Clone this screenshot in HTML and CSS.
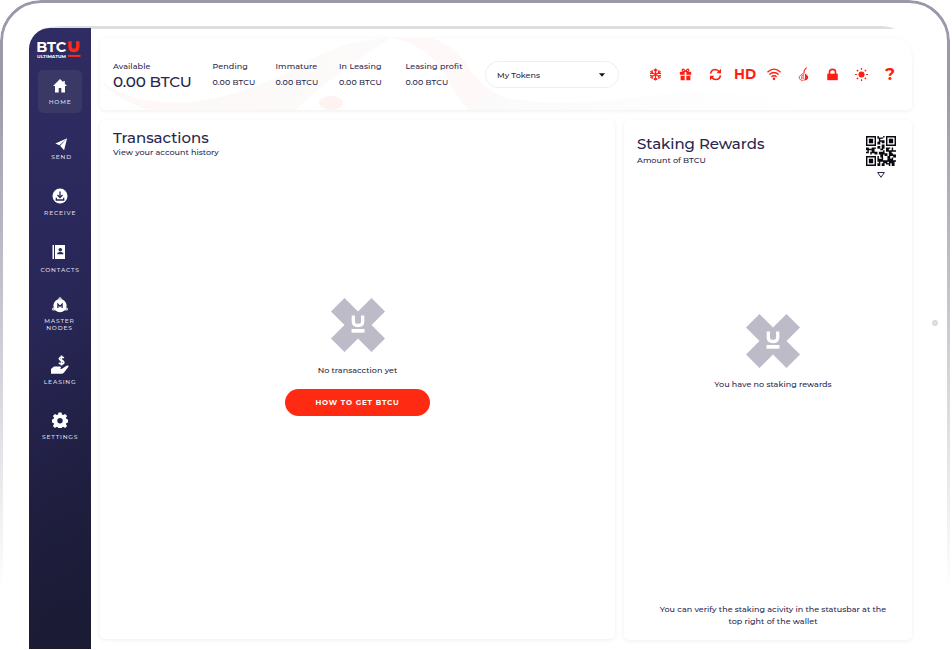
FILE: index.html
```html
<!DOCTYPE html>
<html lang="en">
<head>
<meta charset="utf-8">
<title>BTCU Wallet</title>
<link rel="stylesheet" href="styles.css">
</head>
<body>
<div class="device">
  <div class="bezel"></div>
  <i class="camera"></i>
  <svg class="edge" viewBox="0 0 855 3" preserveAspectRatio="none"><path d="M0 3Q12 0 24 0H842Q850 .5 855 3H0" fill="#dededf"/></svg>
  <div class="app">
    <nav class="sidebar">
      <svg class="logo" viewBox="0 0 44 17">
        <text class="logo-name" x="-.8" y="10.500" textLength="30" lengthAdjust="spacingAndGlyphs">BTC</text>
        <path d="M33 .3v5.700q0 3.500 3.900 3.500t3.900-3.500V.3" fill="none" stroke="#ff2a16" stroke-width="3.400"/>
        <path d="M31 13.900h12.500v2H31z" fill="#ff2a16"/>
        <text class="logo-sub" x="0" y="16.500" textLength="29" lengthAdjust="spacingAndGlyphs">ULTIMATUM</text>
      </svg>
      <a class="item active"><svg viewBox="0 0 16 16"><path d="M8 1L1 8h2v6.500h3.700V10h2.600v4.500H13V8h2l-2.200-2.200V3h-1.500v1.300z"/></svg><span>HOME</span></a>
      <a class="item send"><svg viewBox="0 0 16 16"><path d="M15 1.500L1.500 7.500l4.700 2zM15 1.500L7 10l4.500 5z"/></svg><span>SEND</span></a>
      <a class="item receive"><svg viewBox="0 0 16 16"><circle cx="8" cy="8" r="7.500"/><path class="cut" d="M8 3.500v6M5.500 7L8 9.500 10.500 7M4.300 9.800V12h7.400V9.800"/></svg><span>RECEIVE</span></a>
      <a class="item contacts"><svg viewBox="0 0 16 16"><path d="M1.500 1h1.500v14H1.500zM4 1h10v14H4z"/><circle cx="9.300" cy="5.800" r="1.800" fill="#27265a"/><path d="M6.300 10.200V9l2-1h2l2 1v1.200z" fill="#27265a"/></svg><span>CONTACTS</span></a>
      <a class="item master"><svg viewBox="0 0 16 16"><circle cx="8" cy="8.600" r="6.600"/><circle cx="8" cy="1.900" r="1.600"/><circle cx="1.700" cy="12" r="1.600"/><circle cx="14.300" cy="12" r="1.600"/><path class="cut" d="M5.900 11V7.200L8 9.400l2.100-2.200V11"/><path class="hole" d="M7.500 1.900h1M1.200 12h1M13.800 12h1"/></svg><span>MASTER<br>NODES</span></a>
      <a class="item leasing"><svg viewBox="0 0 18 20"><path d="M12.800 3Q12 2 10.500 2T8.300 3.700Q8.300 5 10.500 5.400T12.900 7.400Q12.700 9 10.500 9T8 7.800M10.500.5v10" fill="none" stroke="#fff" stroke-width="1.600"/><path d="M0 14l3-2.500h5.500q1.500 0 1.500 1.200t-2 1.200h2.500L16 10.500q2-.5 1.500 1.200L13 17.500q-1 1.200-2.500 1.200H0z"/></svg><span>LEASING</span></a>
      <a class="item settings"><svg viewBox="0 0 16 16"><path d="M6.500.5h3l.4 2 1.300.6 1.900-1.200 2 2-1.200 1.900.6 1.300 1.500.4v3l-1.500.4-.6 1.200 1.200 1.900-2 2-1.900-1.200-1.300.6-.4 2h-3l-.4-2-1.300-.6L2.900 16l-2-2 1.200-1.900-.6-1.200-1.500-.4v-3l1.500-.4.600-1.300L.9 3.900l2-2 1.900 1.200 1.300-.6z"/><circle cx="8" cy="8.800" r="2.700" fill="#232250"/></svg><span>SETTINGS</span></a>
    </nav>
    <main class="content">
      <header class="card topbar">
        <svg class="waves" viewBox="0 0 812 72" preserveAspectRatio="none">
          <defs>
            <linearGradient id="w" x1="0" x2="1"><stop offset="0" stop-color="#fef6f5"/><stop offset="1" stop-color="#fbf9f9"/></linearGradient>
            <linearGradient id="g" x1="0" x2="1"><stop offset="0" stop-color="#fafafa"/><stop offset="1" stop-color="#fff"/></linearGradient>
          </defs>
          <path d="M0 43Q35 68 90 64Q145 58 195 30Q245 0 291 0Q225 42 196 72H48Q15 60 0 43" fill="url(#w)" opacity=".8"/>
          <path d="M291 0H330Q350 4 366 25Q385 60 430 66L450 72H368Q350 48 345 36Q325 5 291 0" fill="#fdf7f6" opacity=".75"/>
          <path d="M385 54Q440 72 530 60T700 63V72H368" fill="url(#g)"/>
          <ellipse cx="231" cy="65" rx="12" ry="7" fill="#fef3f1"/>
        </svg>
        <dl class="balances">
          <div class="main"><dt>Available</dt><dd>0.00 BTCU</dd></div>
          <div class="pending"><dt>Pending</dt><dd>0.00 BTCU</dd></div>
          <div class="immature"><dt>Immature</dt><dd>0.00 BTCU</dd></div>
          <div class="in-leasing"><dt>In Leasing</dt><dd>0.00 BTCU</dd></div>
          <div class="profit"><dt>Leasing profit</dt><dd>0.00 BTCU</dd></div>
        </dl>
        <button class="tokens">My Tokens<svg viewBox="0 0 6 4"><path d="M0 .3h6L3 3.700z"/></svg></button>
        <div class="status">
          <svg viewBox="0 0 16 16"><g class="line" stroke-width="1.500"><path d="M8 .5v15M1.500 4.300l13 7.400M1.500 11.700l13-7.400M5.800 1.800L8 4l2.200-2.200M5.800 14.200L8 12l2.200 2.200M1.200 7l3.300-1-.9-3.300M14.800 9l-3.300 1 .9 3.300M1.200 9l3.300 1-.9 3.300M14.800 7l-3.300-1 .9-3.300"/></g></svg>
          <svg viewBox="0 0 16 16"><path d="M1 4.500h6v3.800H1zM9 4.500h6v3.800H9zM2 9.500h5V15H2zM9 9.500h5V15H9z"/><path class="line" stroke-width="1.500" d="M8 4.500Q6 .7 4.500 1.600T5 4.300h6q2-1.800.5-2.700T8 4.500"/></svg>
          <svg viewBox="0 0 16 16"><path class="line" stroke-width="2" d="M2 7q.5-4.700 5.500-5.200 3.200 0 5.200 2.700M14 9q-.5 4.700-5.500 5.200-3.200 0-5.200-2.700"/><path d="M14.800 1v5.500H9.300zM1.200 15V9.500h5.500z"/></svg>
          <b class="hd">HD</b>
          <svg class="wifi" viewBox="0 0 16 16"><path class="line" stroke-width="1.500" d="M.5 6Q8-1.200 15.500 6M2.700 8.700q5.300-4.700 10.600 0M5 11.300q3-2.500 6 0"/><circle cx="8" cy="13.500" r="1.500"/></svg>
          <svg viewBox="0 0 16 16"><path d="M8.700 4.500Q8.500 6.300 11.500 8q3.300 2.200 2 5-1.200 2.700-5 2.500 2.800-5 .2-11"/><path class="line" stroke-width="1" d="M8 6Q7.500 7 5 8.300 1.500 10.500 3 13.300q1.300 2 5 2.200M7.500 8Q4.500 10 5.800 13.500M8 8q-1 3-.3 6"/><path class="line" stroke-width="1.400" d="M12-.5Q8 2.500 8.700 6.500"/></svg>
          <svg viewBox="0 0 16 16"><path d="M1.500 7h13v8h-13z"/><path class="line" stroke-width="2" d="M4.300 8V5q0-3.300 3.700-3.300T11.700 5v3"/></svg>
          <svg viewBox="0 0 16 16"><circle cx="8" cy="8" r="3.700"/><g class="line" stroke-width="1.500"><path d="M8 0v2.300M8 13.700V16M0 8h2.300M13.700 8H16M2.300 2.300L4 4M12 12l1.700 1.700M2.300 13.700L4 12M12 4l1.700-1.700"/></g></svg>
          <b class="help">?</b>
        </div>
      </header>
      <div class="panels">
        <section class="card transactions">
          <h2>Transactions</h2><p>View your account history</p>
          <div class="empty">
            <svg class="cross" viewBox="0 0 54 54"><path d="M13.500 0L27 13.500 40.500 0 54 13.500 40.500 27 54 40.500 40.500 54 27 40.500 13.500 54 0 40.500 13.500 27 0 13.500z"/><path class="u" d="M22.300 17.500v6q0 4 4.700 4t4.700-4v-6"/><path fill="#fff" d="M20.500 31h13v3.700h-13z"/></svg>
            <span>No transacction yet</span>
            <button class="cta">HOW TO GET BTCU</button>
          </div>
        </section>
        <section class="card rewards">
          <div class="rewards-head">
            <div><h2>Staking Rewards</h2><p>Amount of BTCU</p></div>
            <div class="qr">
              <svg viewBox="0 0 21 21"><path fill-rule="evenodd" d="M0 0h7v7H0zM1 1v5h5V1zM2 2h3v3H2zM14 0h7v7h-7zM15 1v5h5V1zM16 2h3v3h-3zM0 14h7v7H0zM1 15v5h5v-5zM2 16h3v3H2z"/><path d="M8 0h1v1h3v1h-2v1h3v2h-2V4h-1v2H8V4h1V2H8zM12 0h1v1h-1zM8 7h2v2H8zM11 6h2v3h-1v1h-2V9h1zM0 8h2v1h2v1H2v2H0v-1h1v-1H0zM4 8h3v1H6v2h2v2H6v-1H4v1H3v-2h1zM9 11h3v-1h1v2h2v2h-2v-1h-1v2h-2v-2H9zM14 8h3v1h-1v2h-2zM18 8h1v2h2v1h-3v1h-2v-2h2zM16 12h3v1h2v2h-2v-1h-2v2h-2v-2h1zM8 14h1v2h2v-1h1v2h3v2h-2v1h-1v-2h-2v3H8v-2h1v-1H8zM15 16h3v-1h1v2h2v1h-1v3h-2v-2h-1v1h-3v-1h2v-1h-1zM11 19h2v2h-2zM16 20h1v1h-1z"/></svg>
              <svg class="more" viewBox="0 0 8 6"><path d="M.6.500h6.800L4 5.300z"/></svg>
            </div>
          </div>
          <div class="empty">
            <svg class="cross" viewBox="0 0 54 54"><path d="M13.500 0L27 13.500 40.500 0 54 13.500 40.500 27 54 40.500 40.500 54 27 40.500 13.500 54 0 40.500 13.500 27 0 13.500z"/><path class="u" d="M22.300 17.500v6q0 4 4.700 4t4.700-4v-6"/><path fill="#fff" d="M20.500 31h13v3.700h-13z"/></svg>
            <span>You have no staking rewards</span>
          </div>
          <footer>You can verify the staking acivity in the statusbar at the<br>top right of the wallet</footer>
        </section>
      </div>
    </main>
  </div>
</div>
</body>
</html>
```
FILE: styles.css
```css
* { box-sizing: border-box; }
body { margin: 0; background: #fff; overflow: hidden; font-family: Montserrat, Inter, sans-serif; font-size: 8px; font-weight: 500; color: #28264c; }
h2, p, dl, dt, dd { margin: 0; font-weight: 500; }
button { font: inherit; color: inherit; }
.device { position: relative; width: 952px; height: 650px; padding: 28px 40px 0 29px; }
.bezel { position: absolute; left: 0; top: 0; width: 950px; height: 680px; border: 3px solid #9a98a9; border-radius: 41px; mask-image: linear-gradient(#000 80px, transparent 590px); }
.camera { position: absolute; left: 932px; top: 320px; width: 6px; height: 6px; border-radius: 50%; background: #e2e2e5; border: 1px solid #d0d0d5; }
.edge { position: absolute; left: 40px; top: 26px; width: 855px; height: 3px; }
.app { position: relative; display: flex; width: 883px; height: 621px; }
.sidebar { width: 62px; height: 621px; padding-top: 13px; border-radius: 21px 0 0 0; background: linear-gradient(110deg, transparent 40%, rgba(22, 22, 38, .35)), linear-gradient(#2e2c62 0%, #292758 45%, #1f1e40 85%, #1d1d3a 100%); display: flex; flex-direction: column; align-items: center; }
.logo { width: 44px; height: 17px; flex: none; margin: 0 0 12px -3px; overflow: visible; }
.logo-name { font-size: 14px; font-weight: 700; fill: #fff; }
.logo-sub { font-size: 3.200px; font-weight: 700; fill: #fff; }
.item { width: 44px; height: 43px; flex: none; margin-bottom: 13px; padding-top: 6px; border-radius: 5px; display: flex; flex-direction: column; align-items: center; color: #dedde7; font-size: 6px; line-height: 7px; letter-spacing: .8px; text-align: center; }
.item.active { background: #3a3864; }
.item svg { width: 16px; height: 16px; margin-bottom: 6px; flex: none; fill: #fff; }
.item span { margin-right: -.2px; white-space: nowrap; }
.item .cut { fill: none; stroke: #28265a; stroke-width: 1.300; }
.item .hole { fill: none; stroke: #28265a; stroke-width: .8; }
.item.active svg { margin: 2px 0 5px; }
.item.send { padding: 11px 0 0 3px; }
.item.send svg { width: 14px; height: 14px; margin: 0 2px 3px 0; }
.item.contacts svg { margin-left: -2px; margin-bottom: 7px; }
.item.master { padding-top: 3px; }
.item.master svg { margin: 0 0 5px -1px; }
.item.master span { margin-right: 1px; }
.item.leasing { padding-top: 5px; }
.item.leasing svg { width: 18px; height: 20px; margin-bottom: 4px; }
.item.settings svg { margin-bottom: 6px; }
.content { margin-left: 9px; width: 812px; padding-top: 10px; }
.card { background: #fff; border-radius: 5px; box-shadow: 0 1px 4px rgba(20, 20, 40, .065); }
.topbar { position: relative; height: 72px; border-radius: 5px 20px 5px 5px; display: flex; }
.waves { position: absolute; inset: 0; width: 812px; height: 72px; border-radius: inherit; }
.balances { position: relative; display: flex; flex: none; width: 385px; padding: 22px 0 0 13px; }
.balances div { flex: none; white-space: nowrap; line-height: 12px; letter-spacing: .1px; }
.balances dd { margin-top: 4px; font-size: 7.900px; letter-spacing: .12px; }
.balances .main { width: 99.500px; }
.balances .main dt { margin-top: -.5px; }
.balances .main dd { margin-top: 1.500px; font-size: 15.200px; line-height: 17px; letter-spacing: -.2px; }
.pending { width: 63px; }
.immature { width: 63.500px; }
.in-leasing { width: 66.500px; }
.tokens { position: relative; flex: none; width: 134px; height: 27px; margin-top: 23px; padding: 0 13px 0 11px; border: 1px solid #eeeef1; border-radius: 14px; background: #fff; display: flex; align-items: center; justify-content: space-between; letter-spacing: .03px; }
.tokens svg { width: 6px; height: 4px; fill: #111127; }
.status { position: relative; flex: none; height: 16px; margin: 28px 0 0 30px; display: grid; grid-template-columns: 30px 30px 30px 28px 29.500px 29px 29px 29px 15px; align-items: center; color: #ff1e12; }
.status svg { width: 13px; height: 13px; fill: #ff1e12; overflow: visible; }
.status .wifi { width: 14px; height: 14px; }
.status .line { fill: none; stroke: #ff1e12; }
.status b { font-size: 13.500px; line-height: 14px; font-weight: 700; }
.status .hd { margin-left: -5px; }
.status .help { font-size: 17px; line-height: 16px; font-weight: 700; margin-left: 1.500px; }
.panels { display: flex; gap: 9px; margin-top: 10px; height: 519px; }
.transactions { width: 515px; padding: 9px 13px; }
h2 { font-size: 15px; line-height: 17px; letter-spacing: -.04px; }
p { line-height: 10px; letter-spacing: .03px; }
.transactions p { margin-top: 1px; }
.empty { display: flex; flex-direction: column; align-items: center; letter-spacing: .04px; }
.transactions .empty { margin-top: 141px; }
.cross { width: 54px; height: 54px; fill: #bcbbc7; }
.cross .u { fill: none; stroke: #fff; stroke-width: 3.300; }
.empty span { line-height: 10px; margin-top: 13px; }
.cta { width: 145px; height: 27px; margin-top: 14px; border: 0; border-radius: 14px; background: #ff2a12; color: #fff; font-size: 7.200px; font-weight: 700; letter-spacing: .8px; }
.rewards { width: 288px; height: 520px; padding: 15px 13px; display: flex; flex-direction: column; }
.rewards-head { display: flex; justify-content: space-between; height: 44px; }
.rewards-head p { margin-top: 3px; }
.qr { width: 36px; padding: 1px 3px; display: flex; flex-direction: column; align-items: center; }
.qr svg { width: 30px; height: 30px; flex: none; fill: #08080e; }
.qr .more { width: 8px; height: 6px; margin-top: 6px; fill: none; stroke: #28264c; stroke-width: 1; }
.rewards .empty { margin-top: 135px; padding-left: 10px; }
.rewards .empty span { margin-top: 11px; }
footer { margin: auto 0 -2px 10px; text-align: center; line-height: 12px; letter-spacing: .04px; white-space: nowrap; }
```
